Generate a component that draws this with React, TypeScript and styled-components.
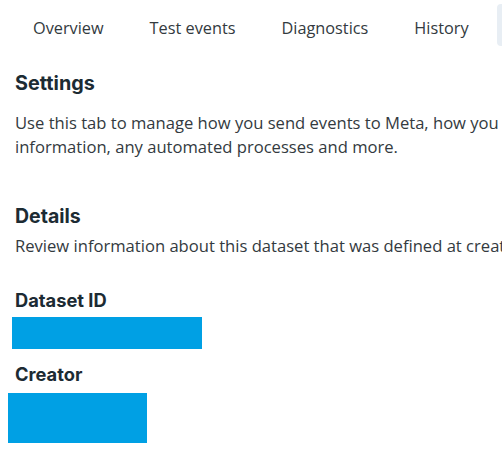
import React from "react";
import styled, { createGlobalStyle } from "styled-components";

const GlobalStyle = createGlobalStyle`
    html, body {
        margin: 0;
        padding: 0;
        background: #ffffff;
    }
    body {
        font-family: "Open Sans", "Noto Sans", sans-serif;
        color: #1c2b33;
        overflow: hidden;
    }
`

const Page = styled.div`
    width: 502px;
    height: 462px;
    display: flex;
    flex-direction: column;
    position: relative;
    overflow: hidden;
`

const TabBar = styled.div`
    display: flex;
    flex-direction: row;
    gap: 46px;
    padding: 16px 0 0 33px;
    height: 40px;
`

const Tab = styled.div`
    font-size: 16.3px;
    line-height: 24px;
    color: #333a40;
    white-space: nowrap;
`

const EdgeTab = styled.div`
    position: absolute;
    top: 4px;
    right: 0;
    width: 5px;
    height: 42px;
    background: #e8eef4;
    border-radius: 4px 0 0 4px;
`

const Content = styled.div`
    display: flex;
    flex-direction: column;
    padding-left: 15px;
`

const Section = styled.div<{ $top: number }>`
    margin-top: ${p => p.$top}px;
`

const Heading = styled.h2<{ $size: number }>`
    margin: 0;
    font-family: "Inter", "Lato", sans-serif;
    font-weight: 700;
    font-size: ${p => p.$size}px;
    line-height: 26px;
    color: #1c2b33;
    white-space: nowrap;
`

const Body = styled.p<{ $gap: number }>`
    margin: ${p => p.$gap}px 0 0 0;
    font-size: 16.6px;
    line-height: 24px;
    color: #333a40;
    white-space: nowrap;
`

const Redacted = styled.div<{ $w: number; $h: number; $shift: number; $gap: number }>`
    width: ${p => p.$w}px;
    height: ${p => p.$h}px;
    margin-left: ${p => -p.$shift}px;
    margin-top: ${p => p.$gap}px;
    background: #00a0e4;
`

const App = () => {
    return (
        <Page>
            <GlobalStyle />
            <TabBar>
                <Tab>Overview</Tab>
                <Tab>Test events</Tab>
                <Tab>Diagnostics</Tab>
                <Tab>History</Tab>
            </TabBar>
            <EdgeTab />
            <Content>
                <Section $top={14}>
                    <Heading $size={19.8}>Settings</Heading>
                    <Body $gap={15}>
                        Use this tab to manage how you send events to Meta, how you
                        <br />
                        information, any automated processes and more.
                    </Body>
                </Section>
                <Section $top={44}>
                    <Heading $size={19.5}>Details</Heading>
                    <Body $gap={5}>Review information about this dataset that was defined at creation.</Body>
                </Section>
                <Section $top={29}>
                    <Heading $size={18.3}>Dataset ID</Heading>
                    <Redacted $w={190} $h={32} $shift={3} $gap={4} />
                </Section>
                <Section $top={12}>
                    <Heading $size={18.3}>Creator</Heading>
                    <Redacted $w={139} $h={50} $shift={7} $gap={6} />
                </Section>
            </Content>
        </Page>
    );
};

export default App;
